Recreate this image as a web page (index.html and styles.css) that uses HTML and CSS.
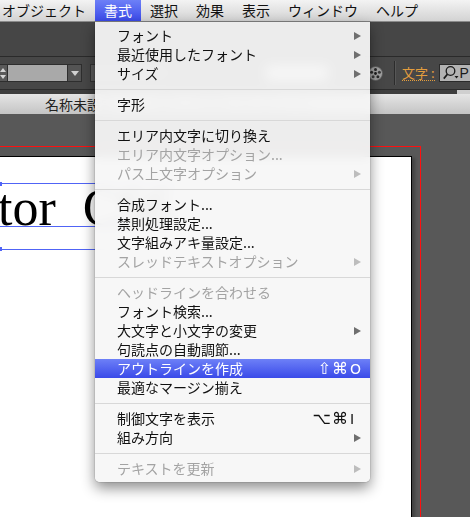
FILE: index.html
```html
<!DOCTYPE html>
<html lang="ja">
<head>
<meta charset="utf-8">
<title>書式メニュー</title>
<link rel="stylesheet" href="styles.css">
</head>
<body>
<div class="screen">
  <div class="menubar">
    <span class="mb-item first">オブジェクト</span>
    <span class="mb-item active">書式</span>
    <span class="mb-item">選択</span>
    <span class="mb-item">効果</span>
    <span class="mb-item">表示</span>
    <span class="mb-item">ウィンドウ</span>
    <span class="mb-item">ヘルプ</span>
  </div>
  <div class="appbar"></div>
  <div class="controlbar">
    <div class="cb-left">
      <div class="spinner"><i class="sp-up"></i><i class="sp-down"></i></div>
      <div class="field"></div>
      <div class="dropbtn"><i class="tri-down"></i></div>
      <div class="field2"></div>
      <div class="field3"></div>
    </div>
    <div class="cb-right">
      <svg class="recolor" width="15" height="15" viewBox="0 0 15 15">
        <circle cx="7.5" cy="7.5" r="7" fill="#a2a2a2" stroke="#5a5a5a" stroke-width="0.8"/>
        <circle cx="7.5" cy="7.5" r="1.4" fill="#1e1e1e"/>
        <circle cx="7.5" cy="3.4" r="1.5" fill="#2a2a2a"/>
        <circle cx="11.4" cy="6.2" r="1.5" fill="#3a3a3a"/>
        <circle cx="9.9" cy="10.8" r="1.5" fill="#2a2a2a"/>
        <circle cx="5.1" cy="10.8" r="1.5" fill="#3a3a3a"/>
        <circle cx="3.6" cy="6.2" r="1.5" fill="#2a2a2a"/>
      </svg>
      <div class="vsep"></div>
      <span class="cb-label">文字 :</span>
      <div class="search">
        <svg class="mag" width="17" height="16" viewBox="0 0 17 16">
          <circle cx="8.5" cy="6" r="4.3" fill="none" stroke="#1a1a1a" stroke-width="1.3"/>
          <line x1="5.4" y1="9.2" x2="1.8" y2="13.6" stroke="#1a1a1a" stroke-width="1.7"/>
          <path d="M12.5 11 h4 l-2 2.6 z" fill="#1a1a1a"/>
        </svg>
        <span class="search-text">P</span>
      </div>
    </div>
  </div>
  <div class="subbar"><div class="stub"></div></div>
  <div class="tabbar"><span class="tab">名称未設定-1 @ 100% (CMYK/プレビュー)</span></div>
  <div class="canvas">
    <div class="bleed">
      <div class="artboard">
        <div class="textobj">
          <span class="handle h-top"></span>
          <span class="baseline"></span>
          <span class="handle h-bottom"></span>
          <span class="art-text">tor CS6</span>
        </div>
      </div>
    </div>
  </div>

  <div class="menu">
    <div class="mi"><span class="ml">フォント</span><i class="arrow"></i></div>
    <div class="mi"><span class="ml">最近使用したフォント</span><i class="arrow"></i></div>
    <div class="mi"><span class="ml">サイズ</span><i class="arrow"></i></div>
    <div class="sep"></div>
    <div class="mi"><span class="ml">字形</span></div>
    <div class="sep"></div>
    <div class="mi"><span class="ml">エリア内文字に切り換え</span></div>
    <div class="mi dis"><span class="ml">エリア内文字オプション...</span></div>
    <div class="mi dis"><span class="ml">パス上文字オプション</span><i class="arrow"></i></div>
    <div class="sep"></div>
    <div class="mi"><span class="ml">合成フォント...</span></div>
    <div class="mi"><span class="ml">禁則処理設定...</span></div>
    <div class="mi"><span class="ml">文字組みアキ量設定...</span></div>
    <div class="mi dis"><span class="ml">スレッドテキストオプション</span><i class="arrow"></i></div>
    <div class="sep"></div>
    <div class="mi dis"><span class="ml">ヘッドラインを合わせる</span></div>
    <div class="mi"><span class="ml">フォント検索...</span></div>
    <div class="mi"><span class="ml">大文字と小文字の変更</span><i class="arrow"></i></div>
    <div class="mi"><span class="ml">句読点の自動調節...</span></div>
    <div class="mi sel"><span class="ml">アウトラインを作成</span><span class="kbd"><span class="mods">⇧⌘</span><span class="key">O</span></span></div>
    <div class="mi"><span class="ml">最適なマージン揃え</span></div>
    <div class="sep"></div>
    <div class="mi"><span class="ml">制御文字を表示</span><span class="kbd"><span class="mods">⌥⌘</span><span class="key">I</span></span></div>
    <div class="mi"><span class="ml">組み方向</span><i class="arrow"></i></div>
    <div class="sep"></div>
    <div class="mi dis"><span class="ml">テキストを更新</span><i class="arrow"></i></div>
  </div>
</div>
</body>
</html>
```

FILE: styles.css
```css
* { box-sizing: border-box; margin: 0; padding: 0; }
html, body { width: 470px; height: 517px; overflow: hidden; }
body {
  background: #585858;
  font-family: "Noto Sans CJK JP", "Noto Sans", sans-serif;
}
.screen {
  position: relative;
  width: 470px;
  height: 517px;
  display: flex;
  flex-direction: column;
  overflow: hidden;
}

/* menu bar */
.menubar {
  height: 22px;
  flex: none;
  display: flex;
  background: linear-gradient(#f3f3f3, #d3d3d3);
  border-bottom: 1px solid #8a8a8a;
  font-size: 14px;
  line-height: 21px;
  color: #111;
  white-space: nowrap;
}
.mb-item { padding: 0 9px; }
.mb-item.first { margin-left: -7px; }
.mb-item.active {
  background: linear-gradient(#6d80f7, #3a4ae9);
  color: #fff;
}

/* application bars */
.appbar { height: 34px; flex: none; background: #464646; }
.controlbar {
  height: 34px;
  flex: none;
  display: flex;
  align-items: center;
  background: #474747;
  border-top: 1px solid #2a2a2a;
  border-bottom: 1px solid #2c2c2c;
  white-space: nowrap;
}
.cb-left {
  flex: 0 0 368px;
  display: flex;
  align-items: center;
}
.spinner {
  width: 10px;
  height: 18px;
  margin-left: -2px;
  background: #5a5a5a;
  border: 1px solid #2e2e2e;
  display: flex;
  flex-direction: column;
  align-items: center;
  justify-content: center;
  gap: 3px;
}
.sp-up, .sp-down { width: 0; height: 0; border-left: 3px solid transparent; border-right: 3px solid transparent; }
.sp-up { border-bottom: 4px solid #d4d4d4; }
.sp-down { border-top: 4px solid #d4d4d4; }
.field {
  width: 60px;
  height: 18px;
  background: #a9a9a9;
  border: 1px solid #2e2e2e;
  border-left: none;
}
.dropbtn {
  width: 14px;
  height: 18px;
  background: #545454;
  border: 1px solid #2e2e2e;
  border-left: none;
  display: flex;
  align-items: center;
  justify-content: center;
}
.tri-down { width: 0; height: 0; border-left: 4px solid transparent; border-right: 4px solid transparent; border-top: 5px solid #d0d0d0; }
.field2 {
  width: 80px;
  height: 18px;
  margin-left: 8px;
  background: #5b5b5b;
  border: 1px solid #333;
}
.field3 {
  width: 64px;
  height: 18px;
  margin-left: 95px;
  background: #e8e8e8;
  border: 1px solid #333;
}
.cb-right {
  flex: none;
  display: flex;
  align-items: center;
}
.recolor { display: block; }
.vsep {
  width: 2px;
  height: 24px;
  margin-left: 11px;
  border-left: 1px solid #2c2c2c;
  border-right: 1px solid #575757;
}
.cb-label {
  margin-left: 6px;
  font-size: 13px;
  line-height: 14px;
  color: #e39d3e;
  border-bottom: 1px dotted #e39d3e;
}
.search {
  margin-left: 4px;
  width: 60px;
  height: 18px;
  background: #b3b3b3;
  border: 1px solid #2a2a2a;
  display: flex;
  align-items: center;
  padding-left: 2px;
}
.mag { display: block; flex: none; }
.search-text {
  margin-left: 1px;
  font-family: "Liberation Sans", sans-serif;
  font-size: 14px;
  color: #1a1a1a;
}
.subbar {
  height: 4px;
  flex: none;
  background: #3e3e3e;
  display: flex;
  justify-content: flex-end;
}
.stub { width: 13px; height: 4px; background: #cfcfcf; }
.tabbar {
  height: 20px;
  flex: none;
  background: linear-gradient(#e5e5e5, #c4c4c4);
  padding-left: 45px;
  font-size: 14px;
  line-height: 20px;
  color: #222;
  white-space: nowrap;
}

/* canvas */
.canvas {
  flex: 1;
  background: #585858;
  padding-top: 32px;
  display: flex;
  flex-direction: column;
}
.bleed {
  flex: 1;
  width: 421px;
  border-top: 1px solid #ff1010;
  border-right: 1px solid #ff1010;
  padding-top: 9px;
  padding-right: 8px;
  display: flex;
  flex-direction: column;
}
.artboard {
  flex: 1;
  background: #fff;
  border-top: 1px solid #000;
  border-right: 1px solid #000;
  box-shadow: 3px 2px 3px rgba(0,0,0,0.25);
}
.textobj {
  position: relative;
  margin-top: 26px;
  width: 240px;
  height: 67px;
  border-top: 1px solid #5064f6;
  border-bottom: 1px solid #5064f6;
}
.baseline {
  position: absolute;
  left: 0;
  right: 0;
  top: 42px;
  height: 1px;
  background: #5064f6;
}
.handle {
  position: absolute;
  left: -2px;
  width: 4px;
  height: 4px;
  background: #5064f6;
}
.h-top { top: -2px; }
.h-bottom { bottom: -2px; }
.art-text {
  position: absolute;
  left: -2px;
  top: -2px;
  font-family: "Liberation Serif", serif;
  font-size: 52px;
  line-height: 52px;
  word-spacing: 14px;
  color: #000;
  white-space: nowrap;
}

/* dropdown menu */
.menu {
  position: absolute;
  left: 95px;
  top: 22px;
  width: 275px;
  padding: 4px 0;
  background: rgba(246,246,246,0.94);
  backdrop-filter: blur(6px);
  border-radius: 0 0 5px 5px;
  box-shadow: 0 6px 14px rgba(0,0,0,0.45), 0 0 0 1px rgba(0,0,0,0.08);
  font-size: 14px;
  color: #111;
}
.mi {
  height: 19px;
  display: flex;
  align-items: center;
  padding: 0 9px 0 22px;
  line-height: 19px;
  white-space: nowrap;
}
.ml { flex: 1; }
.mi.dis { color: #a3a3a3; }
.mi.sel {
  background: linear-gradient(#6d80f7, #3a4ae9);
  color: #fff;
}
.arrow {
  width: 0;
  height: 0;
  border-left: 7px solid #6f6f6f;
  border-top: 4.5px solid transparent;
  border-bottom: 4.5px solid transparent;
}
.mi.dis .arrow { border-left-color: #bdbdbd; }
.kbd {
  display: flex;
  align-items: baseline;
  font-family: "DejaVu Sans", sans-serif;
}
.mods {
  font-size: 16px;
  letter-spacing: 1px;
}
.key {
  width: 12px;
  padding-left: 1px;
  font-size: 14px;
}
.sep {
  height: 12px;
  display: flex;
  align-items: center;
}
.sep::after {
  content: "";
  display: block;
  width: 100%;
  height: 1px;
  background: #d8d8d8;
}
```
